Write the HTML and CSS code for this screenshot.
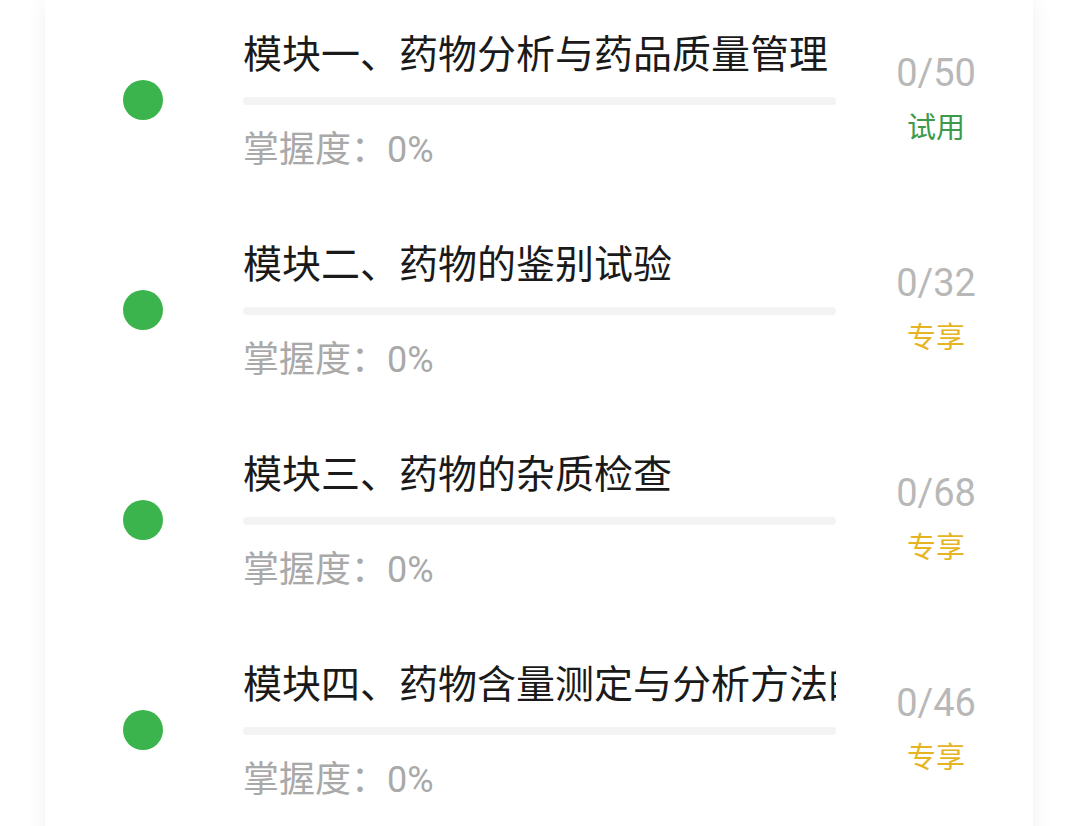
FILE: index.html
```html
<!DOCTYPE html>
<html lang="zh-CN">
<head>
<meta charset="utf-8">
<link rel="stylesheet" href="styles.css">
</head>
<body>
<div class="card">
  <div class="row">
    <div class="dot-col"><span class="dot"></span></div>
    <div class="main">
      <div class="title">模块一、药物分析与药品质量管理</div>
      <div class="bar"></div>
      <div class="mastery">掌握度：0%</div>
    </div>
    <div class="side">
      <div class="count">0/50</div>
      <div class="tag tag-trial">试用</div>
    </div>
  </div>
  <div class="row">
    <div class="dot-col"><span class="dot"></span></div>
    <div class="main">
      <div class="title">模块二、药物的鉴别试验</div>
      <div class="bar"></div>
      <div class="mastery">掌握度：0%</div>
    </div>
    <div class="side">
      <div class="count">0/32</div>
      <div class="tag tag-vip">专享</div>
    </div>
  </div>
  <div class="row">
    <div class="dot-col"><span class="dot"></span></div>
    <div class="main">
      <div class="title">模块三、药物的杂质检查</div>
      <div class="bar"></div>
      <div class="mastery">掌握度：0%</div>
    </div>
    <div class="side">
      <div class="count">0/68</div>
      <div class="tag tag-vip">专享</div>
    </div>
  </div>
  <div class="row">
    <div class="dot-col"><span class="dot"></span></div>
    <div class="main">
      <div class="title">模块四、药物含量测定与分析方法的验证</div>
      <div class="bar"></div>
      <div class="mastery">掌握度：0%</div>
    </div>
    <div class="side">
      <div class="count">0/46</div>
      <div class="tag tag-vip">专享</div>
    </div>
  </div>
</div>
</body>
</html>
```
FILE: styles.css
```css
html, body {
  margin: 0;
  padding: 0;
  background: #ffffff;
  height: 826px;
  overflow: hidden;
}
body {
  font-family: "Roboto", "Noto Sans CJK SC", sans-serif;
}
.card {
  margin-left: 45px;
  width: 988px;
  background: #ffffff;
  box-shadow: 0 0 22px rgba(0, 0, 0, 0.06);
  padding-top: 23px;
  min-height: 900px;
}
.row {
  display: flex;
  height: 210px;
}
.dot-col {
  width: 198px;
  flex: none;
}
.dot {
  display: block;
  width: 40px;
  height: 40px;
  border-radius: 50%;
  background: #3bb44e;
  margin-top: 57px;
  margin-left: 78px;
}
.main {
  width: 593px;
  flex: none;
  overflow: hidden;
}
.title {
  font-family: "Noto Sans CJK SC", sans-serif;
  font-size: 39px;
  line-height: 57px;
  color: #1a1a1a;
  white-space: nowrap;
  text-overflow: clip;
}
.bar {
  margin-top: 17px;
  height: 8px;
  border-radius: 4px;
  background: #f3f3f3;
}
.mastery {
  margin-top: 23px;
  font-size: 36px;
  line-height: 44px;
  color: #a9a9a9;
  white-space: nowrap;
}
.side {
  width: 200px;
  flex: none;
  display: flex;
  flex-direction: column;
  align-items: center;
  padding-top: 28px;
}
.count {
  font-size: 38px;
  line-height: 44px;
  color: #b8b8b8;
}
.tag {
  margin-top: 10px;
  font-family: "Noto Sans CJK SC", sans-serif;
  font-size: 29px;
  line-height: 40px;
}
.tag-trial {
  color: #3d9a4c;
}
.tag-vip {
  color: #e6b422;
}
```
